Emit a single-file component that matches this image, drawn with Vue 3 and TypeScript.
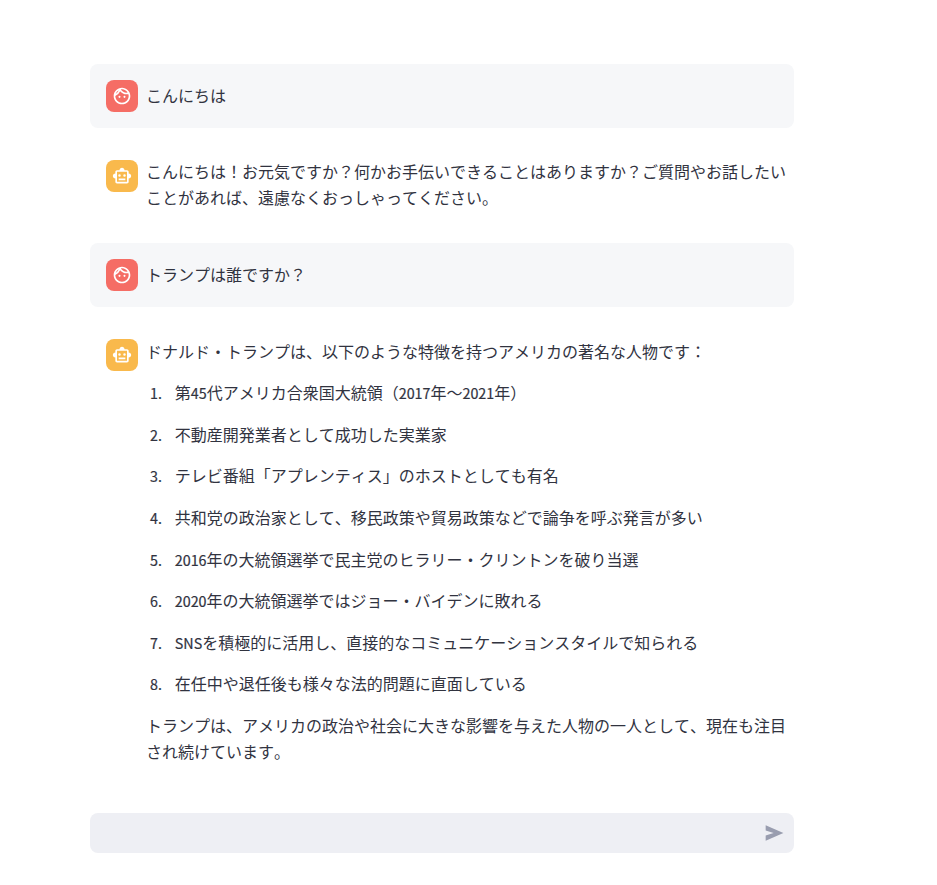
<script setup lang="ts">
interface Message {
  role: 'user' | 'assistant'
  text: string
  items?: string[]
  closing?: string
}

const messages: Message[] = [
  { role: 'user', text: 'こんにちは' },
  {
    role: 'assistant',
    text: 'こんにちは！お元気ですか？何かお手伝いできることはありますか？ご質問やお話したいことがあれば、遠慮なくおっしゃってください。',
  },
  { role: 'user', text: 'トランプは誰ですか？' },
  {
    role: 'assistant',
    text: 'ドナルド・トランプは、以下のような特徴を持つアメリカの著名な人物です：',
    items: [
      '第45代アメリカ合衆国大統領（2017年〜2021年）',
      '不動産開発業者として成功した実業家',
      'テレビ番組「アプレンティス」のホストとしても有名',
      '共和党の政治家として、移民政策や貿易政策などで論争を呼ぶ発言が多い',
      '2016年の大統領選挙で民主党のヒラリー・クリントンを破り当選',
      '2020年の大統領選挙ではジョー・バイデンに敗れる',
      'SNSを積極的に活用し、直接的なコミュニケーションスタイルで知られる',
      '在任中や退任後も様々な法的問題に直面している',
    ],
    closing: 'トランプは、アメリカの政治や社会に大きな影響を与えた人物の一人として、現在も注目され続けています。',
  },
]

// Latin runs are set slightly smaller than the Japanese around them.
const split = (text: string): string[] => text.split(/([A-Za-z0-9]+)/).filter(Boolean)
const isLatin = (part: string): boolean => /^[A-Za-z0-9]/.test(part)
</script>

<template>
  <main class="chat">
    <section v-for="(message, m) in messages" :key="m" class="message" :class="message.role">
      <div class="avatar">
        <svg v-if="message.role === 'user'" viewBox="0 0 24 24" aria-hidden="true">
          <path
            d="M10.25 13a1.25 1.25 0 1 1-2.5 0 1.25 1.25 0 0 1 2.5 0zM15 11.75a1.25 1.25 0 1 0 0 2.5 1.25 1.25 0 0 0 0-2.5zm7 .25c0 5.52-4.48 10-10 10S2 17.52 2 12 6.48 2 12 2s10 4.48 10 10zM10.66 4.12C12.06 6.44 14.6 8 17.5 8c.46 0 .91-.05 1.34-.12C17.44 5.56 14.9 4 12 4c-.46 0-.91.05-1.34.12zM4.42 9.47a8.046 8.046 0 0 0 3.66-4.44 8.046 8.046 0 0 0-3.66 4.44zM20 12c0-.78-.12-1.53-.33-2.24-.7.15-1.42.24-2.17.24a9.974 9.974 0 0 1-7.76-3.69A10.016 10.016 0 0 1 4 11.86c.01.04 0 .09 0 .14 0 4.41 3.59 8 8 8s8-3.59 8-8z"
          />
        </svg>
        <svg v-else viewBox="0 0 24 24" aria-hidden="true">
          <path
            d="M20 9V7c0-1.100-.9-2-2-2h-3c0-1.660-1.340-3-3-3S9 3.340 9 5H6c-1.100 0-2 .9-2 2v2c-1.660 0-3 1.340-3 3s1.340 3 3 3v4c0 1.100.9 2 2 2h12c1.100 0 2-.9 2-2v-4c1.660 0 3-1.340 3-3s-1.340-3-3-3zm-2 10H6V7h12v12zM9 13a1.500 1.500 0 1 1 0-3 1.500 1.500 0 0 1 0 3zm7.500-1.500a1.500 1.500 0 1 1-3 0 1.500 1.500 0 0 1 3 0zM8 15h8v2H8z"
          />
        </svg>
      </div>
      <div class="content">
        <p>{{ message.text }}</p>
        <ol v-if="message.items">
          <li v-for="(item, i) in message.items" :key="i">
            <span class="number">{{ i + 1 }}.</span>
            <span class="item"><template v-for="(part, p) in split(item)" :key="p"><span v-if="isLatin(part)" class="latin">{{ part }}</span><template v-else>{{ part }}</template></template></span>
          </li>
        </ol>
        <p v-if="message.closing">{{ message.closing }}</p>
      </div>
    </section>
    <form class="composer" @submit.prevent>
      <input type="text" aria-label="メッセージ" />
      <button type="submit" aria-label="送信">
        <svg viewBox="0 0 24 24" aria-hidden="true"><path d="M2 2.600v6.400l9.500 3-9.500 3v6.400l21.300-9.400z" /></svg>
      </button>
    </form>
  </main>
</template>

<style>
body {
  background: #fff;
}
</style>

<style scoped>
.chat {
  box-sizing: border-box;
  width: 794px;
  padding: 64px 0 32px 90px;
  display: flex;
  flex-direction: column;
  gap: 16px;
  color: #31333f;
  font-family: "Noto Sans CJK JP", sans-serif;
  font-size: 16px;
  line-height: 25.6px;
  font-kerning: none;
}
.message {
  display: flex;
  gap: 8px;
  padding: 16px 6px 16px 16px;
  border-radius: 8px;
}
.user {
  background: #f6f7f9;
  align-items: center;
}
.avatar {
  flex: none;
  display: flex;
  align-items: center;
  justify-content: center;
  width: 32px;
  height: 32px;
  border-radius: 8px;
  background: #f9b94c;
}
.user .avatar {
  background: #f56d65;
}
.avatar svg {
  width: 20px;
  height: 20px;
  fill: #fff;
}
.content {
  flex: 1;
  min-width: 0;
  display: flex;
  flex-direction: column;
  gap: 16px;
  margin: -0.6px 0 0.6px;
}
p,
ol {
  margin: 0;
  padding: 0;
}
ol {
  display: flex;
  flex-direction: column;
  gap: 16px;
  list-style: none;
}
li {
  display: flex;
  height: 25.6px;
}
.number {
  width: 16px;
  margin-right: 12.8px;
  text-align: right;
  font-size: 14.3px;
}
.latin {
  font-size: 14.3px;
  line-height: 1;
}
.number,
.latin {
  -webkit-text-stroke: 0.2px currentColor;
}
.composer {
  display: flex;
  align-items: center;
  height: 40px;
  margin-top: 16px;
  border-radius: 8px;
  background: #eeeff4;
}
.composer input {
  flex: 1;
  min-width: 0;
  border: 0;
  padding: 0 16px;
  outline: 0;
  background: transparent;
  font: inherit;
}
.composer button {
  display: flex;
  border: 0;
  margin-right: 10.2px;
  padding: 0;
  background: none;
}
.composer svg {
  width: 20px;
  height: 20px;
  fill: #999daf;
}
</style>
